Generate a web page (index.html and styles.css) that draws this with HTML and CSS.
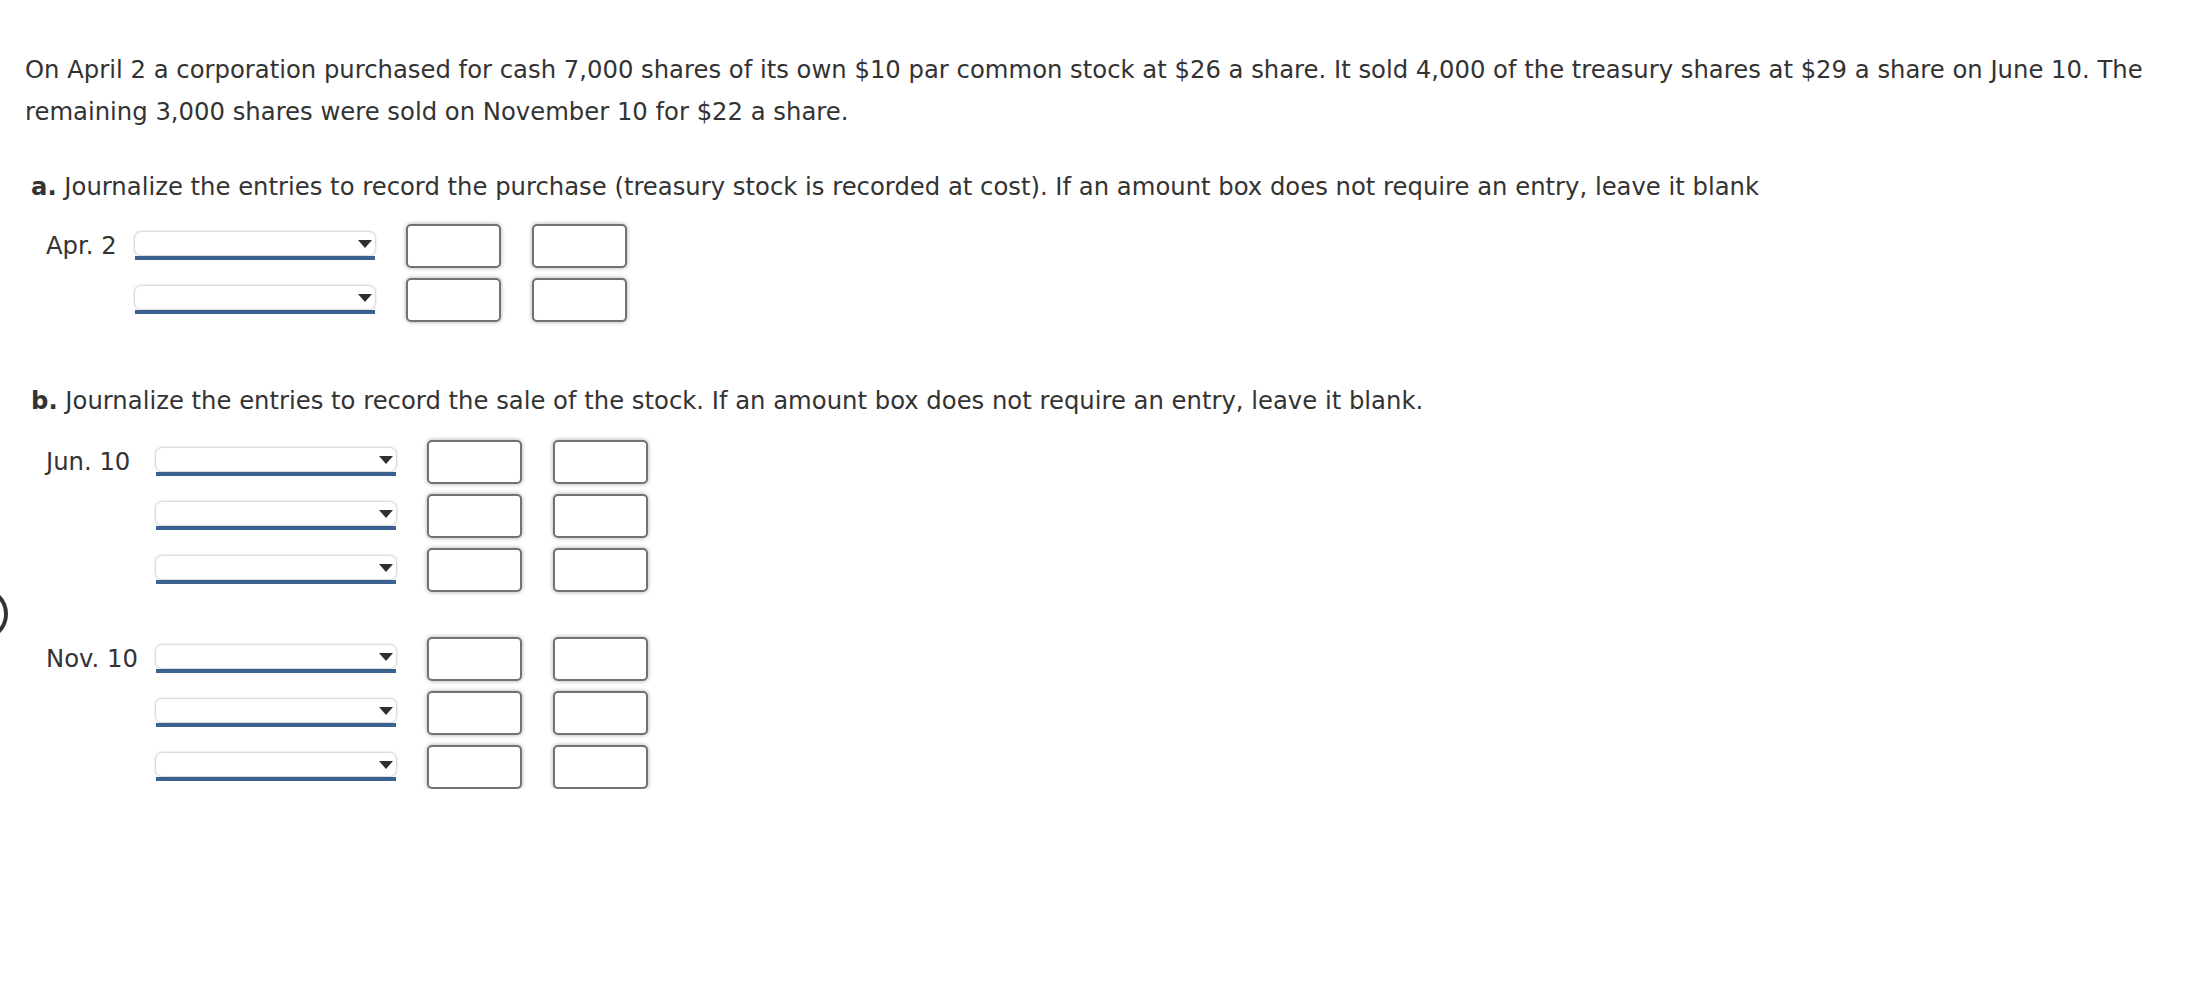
FILE: index.html
```html
<!DOCTYPE html>
<html lang="en">
<head>
<meta charset="utf-8">
<title>Treasury stock journal entries</title>
<link rel="stylesheet" href="styles.css">
</head>
<body>
<div class="help-btn" aria-hidden="true"></div>
<main class="question">
  <p class="intro">On April 2 a corporation purchased for cash 7,000 shares of its own $10 par common stock at $26 a share. It sold 4,000 of the treasury shares at $29 a share on June 10. The remaining 3,000 shares were sold on November 10 for $22 a share.</p>

  <section class="part part-a">
    <p class="prompt"><b>a.</b> Journalize the entries to record the purchase (treasury stock is recorded at cost). If an amount box does not require an entry, leave it blank</p>
    <div class="journal">
      <div class="date">Apr. 2</div>
      <div class="select"><div class="face"><span class="arrow"></span></div><div class="line"></div></div>
      <input class="amt debit" type="text" aria-label="Debit">
      <input class="amt credit" type="text" aria-label="Credit">

      <div class="date"></div>
      <div class="select"><div class="face"><span class="arrow"></span></div><div class="line"></div></div>
      <input class="amt debit" type="text" aria-label="Debit">
      <input class="amt credit" type="text" aria-label="Credit">
    </div>
  </section>

  <section class="part part-b">
    <p class="prompt"><b>b.</b> Journalize the entries to record the sale of the stock. If an amount box does not require an entry, leave it blank.</p>
    <div class="journal">
      <div class="date">Jun. 10</div>
      <div class="select"><div class="face"><span class="arrow"></span></div><div class="line"></div></div>
      <input class="amt debit" type="text" aria-label="Debit">
      <input class="amt credit" type="text" aria-label="Credit">

      <div class="date"></div>
      <div class="select"><div class="face"><span class="arrow"></span></div><div class="line"></div></div>
      <input class="amt debit" type="text" aria-label="Debit">
      <input class="amt credit" type="text" aria-label="Credit">

      <div class="date"></div>
      <div class="select"><div class="face"><span class="arrow"></span></div><div class="line"></div></div>
      <input class="amt debit" type="text" aria-label="Debit">
      <input class="amt credit" type="text" aria-label="Credit">

      <div class="spacer"></div>

      <div class="date">Nov. 10</div>
      <div class="select"><div class="face"><span class="arrow"></span></div><div class="line"></div></div>
      <input class="amt debit" type="text" aria-label="Debit">
      <input class="amt credit" type="text" aria-label="Credit">

      <div class="date"></div>
      <div class="select"><div class="face"><span class="arrow"></span></div><div class="line"></div></div>
      <input class="amt debit" type="text" aria-label="Debit">
      <input class="amt credit" type="text" aria-label="Credit">

      <div class="date"></div>
      <div class="select"><div class="face"><span class="arrow"></span></div><div class="line"></div></div>
      <input class="amt debit" type="text" aria-label="Debit">
      <input class="amt credit" type="text" aria-label="Credit">
    </div>
  </section>
</main>
</body>
</html>
```
FILE: styles.css
```css
html, body {
  margin: 0;
  padding: 0;
  background: #ffffff;
}

body {
  font-family: "DejaVu Sans", Verdana, sans-serif;
  font-size: 24.3px;
  line-height: 42px;
  color: #333333;
}

.question {
  padding: 49px 30px 0 25px;
}

.intro {
  margin: 0;
}

.prompt {
  margin: 0;
  padding-left: 6px;
}

.part-a {
  margin-top: 33px;
}

.part-b {
  margin-top: 58px;
}

.part-a .journal {
  margin-top: 16px;
}

.part-b .journal {
  margin-top: 18px;
}

.journal {
  display: grid;
  grid-template-columns: max-content max-content max-content max-content;
  row-gap: 10px;
  align-items: center;
  padding-left: 21px;
}

.date {
  padding-right: 18px;
}

.spacer {
  grid-column: 1 / -1;
  height: 25px;
}

.select {
  width: 240px;
  height: 28px;
  display: flex;
  flex-direction: column;
}

.select .face {
  position: relative;
  height: 23px;
  background: #ffffff;
  border-radius: 6px;
  box-shadow: 0 0 3px rgba(0, 0, 0, 0.4);
}

.select .arrow {
  position: absolute;
  right: 3px;
  top: 8px;
  width: 0;
  height: 0;
  border-left: 7px solid transparent;
  border-right: 7px solid transparent;
  border-top: 8px solid #2f2f2f;
}

.select .line {
  height: 4px;
  margin-top: 1px;
  background: #3b6391;
}

.amt {
  box-sizing: border-box;
  width: 95px;
  height: 44px;
  margin: 0;
  padding: 0 6px;
  border: 2px solid #727272;
  border-radius: 5px;
  box-shadow: 0 0 4px rgba(0, 0, 0, 0.35);
  background: #ffffff;
  font: inherit;
}

.amt.debit {
  margin-left: 31px;
}

.amt.credit {
  margin-left: 31px;
}

.help-btn {
  position: absolute;
  left: -46px;
  top: 587px;
  width: 46px;
  height: 46px;
  border: 4px solid #333333;
  border-radius: 50%;
  background: #ffffff;
}
```
